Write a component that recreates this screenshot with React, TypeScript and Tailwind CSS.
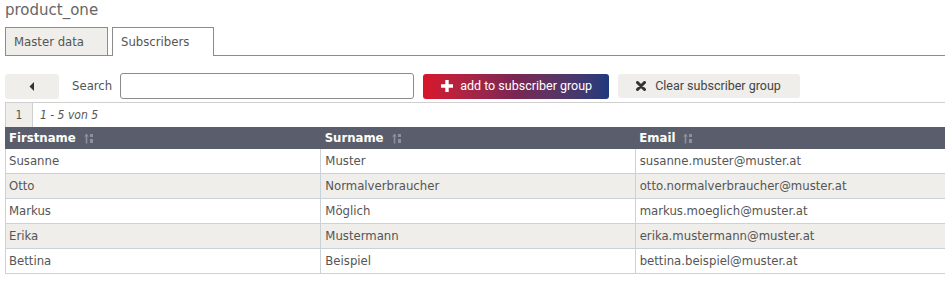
import React from "react";

const rows = [
  ["Susanne", "Muster", "susanne.muster@muster.at"],
  ["Otto", "Normalverbraucher", "otto.normalverbraucher@muster.at"],
  ["Markus", "Möglich", "markus.moeglich@muster.at"],
  ["Erika", "Mustermann", "erika.mustermann@muster.at"],
  ["Bettina", "Beispiel", "bettina.beispiel@muster.at"],
];

function SortIcon() {
  return (
    <svg width="10" height="11" viewBox="0 0 10 11" className="ml-[8px] inline-block">
      <path d="M2.5 0.5 L0.2 3.5 H1.7 V10.5 H3.3 V3.5 H4.8 Z" fill="#8d919c" />
      <rect x="6" y="1" width="3" height="3" fill="#8d919c" />
      <rect x="6" y="6" width="3" height="4" fill="#8d919c" />
    </svg>
  );
}

export default function App() {
  const font = { fontFamily: '"DejaVu Sans Condensed", "DejaVu Sans", sans-serif' } as React.CSSProperties;
  return (
    <div className="w-[945px] h-[291px] overflow-hidden bg-white text-[#555]" style={font}>
      <div className="pl-[5px] pt-[1px] text-[15px] leading-[18px] text-[#666] [font-family:'DejaVu_Sans',sans-serif]">
        product_one
      </div>
      {/* tabs */}
      <div className="mt-[8px] pl-[5px] flex items-end h-[29px]">
        <div className="flex items-end border-b border-[#8c8c8c] w-full h-full">
          <div className="h-[28px] w-[103px] bg-[#efeeea] border border-b-0 border-[#8c8c8c] text-[13px] pl-[8px] flex items-center text-[#555] font-stretch-condensed">
            Master data
          </div>
          <div className="ml-[4px] h-[29px] w-[102px] bg-white border border-b-0 border-[#8c8c8c] -mb-px text-[13px] pl-[8px] flex items-center text-[#555] font-stretch-condensed">
            Subscribers
          </div>
        </div>
      </div>
      {/* toolbar */}
      <div className="mt-[17px] pl-[5px] flex items-center h-[26px]">
        <div className="w-[54px] h-[25px] rounded-[3px] bg-[#efeeea] flex items-center justify-center">
          <svg width="6" height="9" viewBox="0 0 6 9">
            <path d="M5 0 L0.5 4.5 L5 9 Z" fill="#333" />
          </svg>
        </div>
        <div className="ml-[13px] text-[13px] text-[#555] font-stretch-condensed">Search</div>
        <div className="ml-[8px] w-[294px] h-[26px] border border-[#8c8c8c] rounded-[3px] bg-white" />
        <div className="ml-[9px] w-[186px] h-[25px] rounded-[3px] bg-gradient-to-r from-[#d8142a] via-[#7a2552] to-[#1e3a7d] flex items-center text-white text-[12.5px] [font-family:Roboto,sans-serif]">
          <svg width="12" height="12" viewBox="0 0 12 12" className="ml-[18px]">
            <path d="M4.3 0 H7.7 V4.3 H12 V7.7 H7.7 V12 H4.3 V7.7 H0 V4.3 H4.3 Z" fill="#fff" />
          </svg>
          <span className="ml-[7px]">add to subscriber group</span>
        </div>
        <div className="ml-[9px] w-[182px] h-[24px] rounded-[3px] bg-[#efeeea] flex items-center text-[#444] text-[12.5px] [font-family:Roboto,sans-serif]">
          <svg width="10" height="10" viewBox="0 0 10 10" className="ml-[18px]">
            <path d="M1.5 1.5 L8.5 8.5 M8.5 1.5 L1.5 8.5" stroke="#333" strokeWidth="3" strokeLinecap="round" />
          </svg>
          <span className="ml-[9px]">Clear subscriber group</span>
        </div>
      </div>
      {/* table area */}
      <div className="mt-[3px] ml-[5px] w-[944px] border-t border-[#cfcfcf]">
        <div className="flex h-[24px] items-center text-[12px]">
          <div className="w-[28px] h-full bg-[#efeeea] border-l border-r border-[#cfcfcf] flex items-center justify-center text-[#555] font-stretch-condensed">
            1
          </div>
          <div className="ml-[7px] italic text-[#555] text-[12px] font-stretch-condensed">1 - 5 von 5</div>
        </div>
        <div className="grid grid-cols-3 h-[22px] bg-[#5a5e6c] text-white text-[13px] font-bold font-stretch-condensed">
          <div className="flex items-center pl-[4px]">Firstname<SortIcon /></div>
          <div className="flex items-center pl-[5px]">Surname<SortIcon /></div>
          <div className="flex items-center pl-[5px]">Email<SortIcon /></div>
        </div>
        {rows.map((r, i) => (
          <div
            key={i}
            className={
              "grid grid-cols-3 h-[25px] border-b border-l border-[#c9d1d9] text-[13px] text-[#555] font-stretch-condensed " +
              (i % 2 === 1 ? "bg-[#efeeea]" : "bg-white")
            }
          >
            <div className="flex items-center pl-[3px]">{r[0]}</div>
            <div className="flex items-center pl-[4px] border-l border-[#c9d1d9]">{r[1]}</div>
            <div className="flex items-center pl-[4px] border-l border-[#c9d1d9]">{r[2]}</div>
          </div>
        ))}
      </div>
    </div>
  );
}
